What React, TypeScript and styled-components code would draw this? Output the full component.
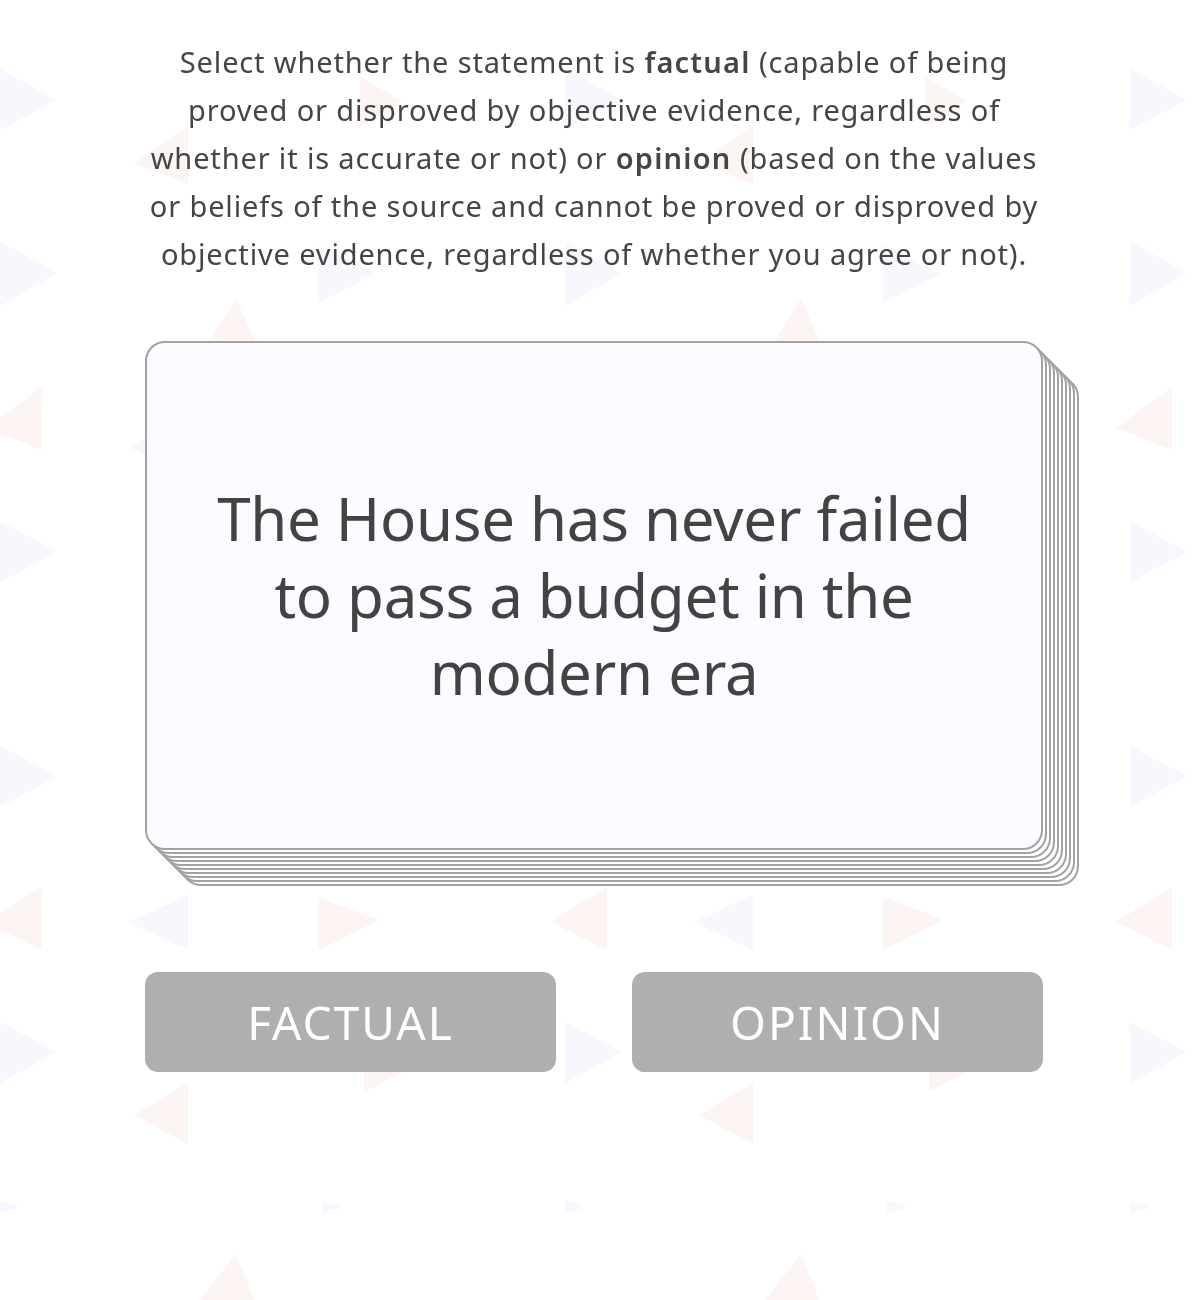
import styled, { createGlobalStyle } from "styled-components";

const GlobalStyle = createGlobalStyle`
  html, body {
    margin: 0;
    padding: 0;
    background: #ffffff;
  }
  body {
    font-family: "Noto Sans", "Open Sans", sans-serif;
    color: #444444;
  }
`;

// background confetti: one column of triangles, repeated every TILE px
const TILE = 565;
type Tri = { c: "r" | "b"; p: number[] };
const triangles: Tri[] = [
  { c: "b", p: [0, 69, 0, 130, 57, 100] },
  { c: "r", p: [360, 77, 360, 126, 402, 101] },
  { c: "r", p: [188, 126, 188, 184, 134, 163] },
  { c: "b", p: [0, 241, 0, 306, 57, 273] },
  { c: "b", p: [318, 245, 318, 303, 375, 274] },
  { c: "r", p: [208, 345, 256, 345, 236, 298] },
  { c: "r", p: [42, 387, 42, 450, -14, 428] },
  { c: "b", p: [188, 414, 188, 472, 130, 448] },
  { c: "r", p: [320, 400, 320, 462, 378, 428] },
  { c: "b", p: [0, 521, 0, 582, 57, 552] },
  { c: "r", p: [205, 640, 255, 640, 236, 600] },
  { c: "b", p: [0, 746, 0, 807, 57, 776] },
  { c: "r", p: [42, 887, 42, 950, -14, 922] },
  { c: "b", p: [188, 895, 188, 950, 128, 922] },
  { c: "r", p: [318, 897, 318, 950, 379, 920] },
  { c: "b", p: [0, 1022, 0, 1083, 57, 1052] },
  { c: "r", p: [364, 1037, 364, 1092, 421, 1062] },
  { c: "r", p: [188, 1083, 188, 1144, 134, 1115] },
  { c: "b", p: [0, 1200, 0, 1214, 20, 1207] },
  { c: "b", p: [322, 1200, 322, 1214, 342, 1207] },
  { c: "r", p: [200, 1300, 254, 1300, 236, 1254] },
];

const Backdrop = styled.svg`
  position: fixed;
  inset: 0;
  width: 100%;
  height: 100%;
  z-index: 0;
  pointer-events: none;
`;

const Page = styled.main`
  position: relative;
  z-index: 1;
  width: calc(100% - 12px);
  min-height: 1300px;
  display: flex;
  flex-direction: column;
  align-items: center;
  padding-top: 38px;
  box-sizing: border-box;
`;

const Column = styled.div`
  width: 898px;
  display: flex;
  flex-direction: column;
`;

const Instructions = styled.p`
  margin: 0;
  font-size: 29px;
  line-height: 48px;
  letter-spacing: 0.85px;
  text-align: center;
  color: #454545;

  b {
    font-weight: 600;
    letter-spacing: 1.2px;
  }
`;

const stack = Array.from({ length: 9 }, (_, i) => {
  const o = (i + 1) * 4;
  return `${o}px ${o}px 0 -2px #ffffff, ${o}px ${o}px 0 0 #a2a2a2`;
}).join(", ");

const Card = styled.div`
  margin-top: 63px;
  height: 509px;
  box-sizing: border-box;
  border: 2px solid #a2a2a2;
  border-radius: 20px;
  background: #fcfbff;
  box-shadow: ${stack};
  display: flex;
  align-items: center;
  justify-content: center;
  padding: 0 48px;
`;

const Statement = styled.h2`
  margin: 0;
  font-size: 60px;
  font-weight: 400;
  line-height: 77px;
  letter-spacing: -0.3px;
  text-align: center;
  color: #434343;
`;

const Choices = styled.div`
  margin-top: 122px;
  display: grid;
  grid-template-columns: 411px 411px;
  justify-content: space-between;
`;

const ChoiceButton = styled.button`
  height: 100px;
  border: none;
  border-radius: 13px;
  background: #afafaf;
  color: #ffffff;
  font-family: "Noto Sans", "Open Sans", sans-serif;
  font-size: 46px;
  font-weight: 400;
  letter-spacing: 2px;
  cursor: pointer;
  padding: 0;
`;

export default function App() {
  const cols = [-1, 0, 1, 2];
  return (
    <>
      <GlobalStyle />
      <Backdrop viewBox="0 0 1200 1300" preserveAspectRatio="xMinYMin slice">
        {cols.map((k) =>
          triangles.map((t, i) => (
            <polygon
              key={`${k}-${i}`}
              points={t.p.map((v, j) => (j % 2 === 0 ? v + k * TILE : v)).join(" ")}
              fill={t.c === "r" ? "#e25555" : "#4d6fe0"}
              opacity={t.c === "r" ? 0.065 : 0.05}
            />
          ))
        )}
      </Backdrop>
      <Page>
        <Column>
          <Instructions>
            Select whether the statement is <b>factual</b> (capable of being proved or
            disproved by objective evidence, regardless of whether it is accurate or not)
            or <b>opinion</b> (based on the values or beliefs of the source and cannot be
            proved or disproved by objective evidence, regardless of whether you agree or
            not).
          </Instructions>
          <Card>
            <Statement>The House has never failed to pass a budget in the modern era</Statement>
          </Card>
          <Choices>
            <ChoiceButton>FACTUAL</ChoiceButton>
            <ChoiceButton>OPINION</ChoiceButton>
          </Choices>
        </Column>
      </Page>
    </>
  );
}
